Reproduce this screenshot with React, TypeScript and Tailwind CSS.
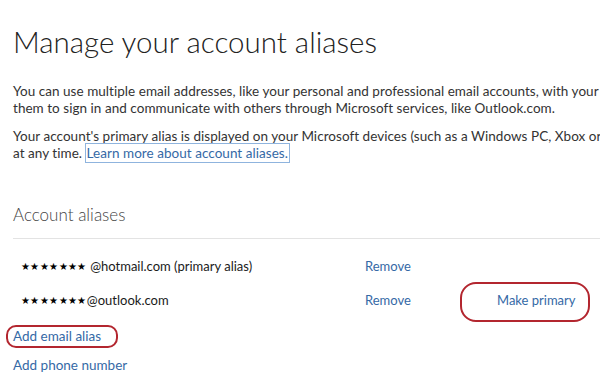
import React from 'react';

const Stars = () => <span className="text-[10px] tracking-[0.4px] text-black align-[1px]">★★★★★★★</span>;

const Circled: React.FC<{ className: string; children: React.ReactNode }> = ({ className, children }) => (
  <span className="relative inline-block">
    {children}
    <span className={`pointer-events-none absolute border-2 border-[#b3262f] ${className}`} />
  </span>
);

export default function App() {
  const aliases = [
    { addr: ' @hotmail.com (primary alias)', primary: true },
    { addr: '@outlook.com', primary: false },
  ];

  return (
    <div className="w-[600px] h-[382px] overflow-hidden bg-white text-[#333] font-['Lato',sans-serif]">
      <div className="pl-[13px] pt-[22px]">
        <h1 className="text-[29.5px] font-light leading-[40px] text-[#222]">Manage your account aliases</h1>

        <div className="mt-[21px] text-[13.5px] leading-[17px] whitespace-nowrap tracking-[0.04px]">
          <p>
            You can use multiple email addresses, like your personal and professional email accounts, with your
            <br />
            them to sign in and communicate with others through Microsoft services, like Outlook.com.
          </p>
          <p className="mt-[11px]">
            Your account's primary alias is displayed on your Microsoft devices (such as a Windows PC, Xbox or
            <br />
            at any time.{' '}
            <a className="text-[#3569a6] outline outline-1 outline-[#8fb4de] px-[1px] py-[1px]">Learn more about account aliases.</a>
          </p>
        </div>

        <h2 className="mt-[41px] text-[17px] font-light text-[#444] leading-[24px]">Account aliases</h2>
      </div>

      <div className="ml-[13px] mt-[11px] border-t border-[#e3e3e3]" />

      <div className="text-[13px] leading-[18px]">
        {aliases.map((a, i) => (
          <div key={i} className="flex items-center h-[34px] first:mt-[10px]">
            <div className="w-[365px] pl-[21px] text-[#1a1a1a]">
              <Stars />
              {a.addr}
            </div>
            <a className="w-[132px] text-[#3569a6]">Remove</a>
            {!a.primary && (
              <Circled className="-left-[37px] -right-[14px] -top-[9px] -bottom-[13px] rounded-[16px]">
                <a className="text-[#3569a6]">Make primary</a>
              </Circled>
            )}
          </div>
        ))}

        <div className="pl-[13px] mt-[10px] flex flex-col items-start gap-[11px] text-[13.5px] text-[#3569a6]">
          <Circled className="-left-[7px] -right-[17px] -top-[2px] -bottom-[3px] rounded-[10px]">
            <a>Add email alias</a>
          </Circled>
          <a>Add phone number</a>
        </div>
      </div>
    </div>
  );
}
